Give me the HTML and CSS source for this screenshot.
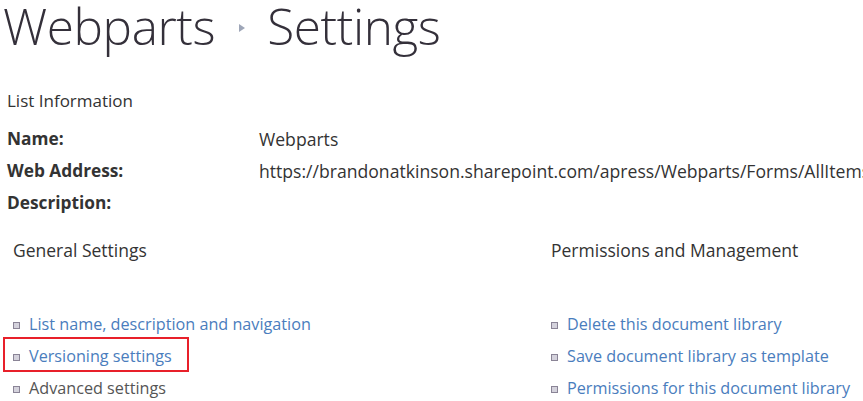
FILE: index.html
```html
<!DOCTYPE html>
<html>
<head>
<meta charset="utf-8">
<link rel="stylesheet" href="styles.css">
</head>
<body>
<div class="page">
  <h1 class="title">
    <span>Webparts</span>
    <svg class="crumb" width="8" height="10" viewBox="0 0 8 10"><polygon points="1,1 7,5 1,9" fill="#9ea6b8"/></svg>
    <span>Settings</span>
  </h1>
  <div class="info-head">List Information</div>
  <div class="info">
    <div class="label">Name:</div><div class="value">Webparts</div>
    <div class="label">Web Address:</div><div class="value">https://brandonatkinson.sharepoint.com/apress/Webparts/Forms/AllItems.aspx</div>
    <div class="label">Description:</div><div class="value"></div>
  </div>
  <div class="sections">
    <div class="section left">
      <div class="sec-head">General Settings</div>
      <ul class="links">
        <li><span class="bullet"></span><a>List name, description and navigation</a></li>
        <li class="hl"><span class="bullet"></span><a>Versioning settings</a></li>
        <li><span class="bullet"></span><span class="plain">Advanced settings</span></li>
      </ul>
    </div>
    <div class="section right">
      <div class="sec-head">Permissions and Management</div>
      <ul class="links">
        <li><span class="bullet"></span><a>Delete this document library</a></li>
        <li><span class="bullet"></span><a>Save document library as template</a></li>
        <li><span class="bullet"></span><a>Permissions for this document library</a></li>
      </ul>
    </div>
  </div>
</div>
</body>
</html>
```
FILE: styles.css
```css
html, body { margin: 0; padding: 0; background: #fff; overflow: hidden; }
body { font-family: "Open Sans", "Noto Sans", sans-serif; color: #444; width: 863px; height: 401px; }
.page { width: 863px; overflow: hidden; }
.title {
  margin: 0; height: 52px; display: flex; align-items: center;
  font-weight: 300; font-size: 49.5px; color: #34303a; line-height: 52px;
  padding-left: 3px; white-space: nowrap; letter-spacing: -0.4px;
}
.crumb { margin: 0 21px 0 23px; position: relative; top: 2px; }
.info-head { margin-top: 39px; padding-left: 7px; font-size: 17px; line-height: 20px; color: #333; }
.info {
  display: grid; grid-template-columns: 252px 1fr; padding-left: 7px;
  margin-top: 18px; row-gap: 12px; white-space: nowrap;
}
.label { font-weight: 700; font-size: 17.3px; line-height: 20px; color: #333; }
.value { font-size: 17.6px; line-height: 20px; color: #333; }
.sections { display: flex; margin-top: 27px; }
.section.left { width: 538px; padding-left: 13px; }
.section.right { flex: 1; }
.sec-head { font-size: 17.5px; line-height: 20px; color: #333; }
.links { list-style: none; margin: 48px 0 0 0; padding: 0; }
.links li { display: flex; align-items: center; height: 32px; font-size: 16.2px; white-space: nowrap; }
.bullet { width: 5px; height: 5px; border: 1px solid #8a8496; background: #d4d2dc; margin-right: 9px; flex: none; position: relative; top: 1px; }
.links a { color: #4a7dbd; }
.plain { color: #555; }
.hl { position: relative; }
.hl::after { content: ""; position: absolute; left: -10px; top: -3px; width: 182px; height: 31px; border: 2px solid #e8202a; }
```
